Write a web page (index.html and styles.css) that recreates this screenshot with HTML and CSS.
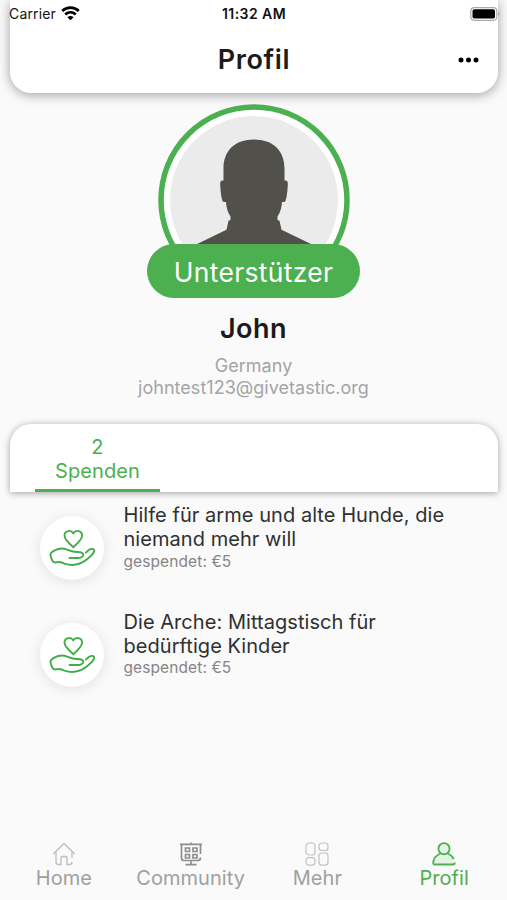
FILE: index.html
```html
<!DOCTYPE html>
<html lang="de">
<head>
<meta charset="utf-8">
<title>Profil</title>
<link rel="stylesheet" href="styles.css">
</head>
<body>
<svg class="defs" width="0" height="0">
  <symbol id="hand-heart" viewBox="0 0 64 64">
    <path d="M33.300 31.200C29 27.500 24.500 23.500 24.500 19.600c0-5 6.400-6.400 8.800-2.200 2.400-4.200 8.800-2.800 8.800 2.200 0 3.900-4.500 7.900-8.800 11.600z"/>
    <path d="M29.500 42h8c6.800 0 7.600-5.500 2-5.700-5.500-.2-8.500-.8-12.500-2.700-4-1.800-8.500-1.200-12.700 1-3 1.500-4.300 2.500-3.800 4.800.4 2 1 4 2.200 5.800 1.300 2 3 1.200 5.200.9 2.200-.3 4 .5 6.500 1.500 7 2.400 13 1.500 18-1.200 3.500-2 6.500-4.300 9-7 2-2.200 3.500-4.200 2.600-5.600-1.200-1.600-3.700-1-5.500.5l-2.700 2.300"/>
  </symbol>
</svg>
<div class="screen">
  <header class="header">
    <div class="status">
      <div class="carrier">Carrier
        <svg width="19" height="15" viewBox="0 0 19 15"><g fill="none" stroke="#000" stroke-width="2.700"><path d="M1.200 5c4.800-4.400 11.800-4.400 16.600 0"/><path d="M4.200 8.500c3.100-2.800 7.500-2.800 10.600 0"/></g><path d="M9.500 14.300L6.400 11.200q3.100-2.500 6.200 0z"/></svg>
      </div>
      <div class="clock">11:32 AM</div>
      <svg class="battery" width="31" height="14" viewBox="0 0 31 14"><rect x=".8" y=".6" width="26" height="12.700" rx="3.500" fill="#fff" stroke="#aaa" stroke-width="1.200"/><rect x="2.500" y="2.300" width="22.500" height="9.300" rx="1.800"/><path d="M28.500 4.800q2.200 2.100 0 4.300z" fill="#999"/></svg>
    </div>
    <div class="titlebar">
      <h1>Profil</h1>
      <svg class="more" width="22" height="6" viewBox="0 0 22 6"><circle cx="3" cy="3" r="2.500"/><circle cx="10.500" cy="3" r="2.500"/><circle cx="18" cy="3" r="2.500"/></svg>
    </div>
  </header>
  <section class="profile">
    <div class="avatar">
      <svg width="192" height="192" viewBox="158 103.500 192 192">
        <circle cx="254" cy="199.500" r="93" fill="#fff" stroke="#4caf50" stroke-width="5.500"/>
        <circle cx="254" cy="199.500" r="84" fill="#ebebeb"/>
        <path fill="#51504a" d="M254 139c-19 0-30.500 11-30.500 29v12c-3.500-.5-3.500 2-3.200 6 .4 6 .9 10 2 14 .5 1.700 2 1.500 3.700 1.500.5 6 1.500 10 4.500 14.500v3.500l-2 .8-2 9-31 15v10h117v-10l-31-15-2-9-2-.8v-3.500c3-4.500 4-8.500 4.500-14.500 1.700 0 3.200.2 3.700-1.500 1.100-4 1.600-8 2-14 .3-4 .3-6.500-3.200-6v-12c0-18-11.500-29-30.500-29z"/>
      </svg>
    </div>
    <div class="badge">Unterstützer</div>
    <h2>John</h2>
    <div class="country">Germany</div>
    <div class="email">johntest123@givetastic.org</div>
  </section>
  <nav class="tabs">
    <div class="tab"><span>2</span><span>Spenden</span></div>
  </nav>
  <main class="list">
    <article class="item">
      <div class="round"><svg width="64" height="64"><use href="#hand-heart"/></svg></div>
      <div><h3>Hilfe für arme und alte Hunde, die<br>niemand mehr will</h3><p>gespendet: €5</p></div>
    </article>
    <article class="item">
      <div class="round"><svg width="64" height="64"><use href="#hand-heart"/></svg></div>
      <div><h3>Die Arche: Mittagstisch für<br>bedürftige Kinder</h3><p>gespendet: €5</p></div>
    </article>
  </main>
  <footer class="bottom">
    <div class="nav"><svg width="24" height="24" viewBox="0 0 24 24" stroke="#bdbdbd" stroke-width="1.300"><path d="M1.300 12L12 1.500 22.700 12M4 10v10q0 2.500 2.500 2.500H9V16q0-1.500 1.500-1.500h3q1.500 0 1.500 1.500v6.500h2.500q2.500 0 2.500-2.500M20 10v6"/></svg><span>Home</span></div>
    <div class="nav"><svg width="24" height="24" viewBox="0 0 24 24" stroke="#8e8e8e" stroke-width="1.700"><path d="M1 2.300h22M12 .5v2M2.500 2.500V16q0 2.500 2.500 2.500h14q2.500 0 2.500-3M21.500 2.500V12M12 18v4.500M6.500 22.700h11M6.500 6h4v3.500h-4zM14 6h4v3.500h-4zM6.500 12.500h4V16h-4zM14 12.500h4V16h-4z"/></svg><span>Community</span></div>
    <div class="nav"><svg width="24" height="24" viewBox="0 0 24 24" stroke="#c2c2c2" stroke-width="1.200"><rect x="1" y="1" width="9" height="12" rx="3"/><rect x="14" y="1" width="9" height="7.500" rx="3"/><rect x="1" y="15.700" width="9" height="7.500" rx="3"/><rect x="14" y="11" width="9" height="12.200" rx="3"/></svg><span>Mehr</span></div>
    <div class="nav active"><svg width="24" height="24" viewBox="0 0 24 24" stroke="#4caf50" stroke-width="1.800"><path fill="#e3f3e4" stroke="none" d="M1.500 22.500c0-6 4.500-9.500 10.500-9.500s10.500 3.500 10.500 9.500z"/><path d="M8.500 11.500C4 13.500 1.200 17 1.200 21q0 1.500 1.500 1.500H21q1.800 0 1.800-2M15.500 11.500c3.500 1.200 5 3 6.300 5.500"/><circle cx="12" cy="6.700" r="5.600" fill="#e3f3e4"/></svg><span>Profil</span></div>
  </footer>
</div>
</body>
</html>
```
FILE: styles.css
```css
* { box-sizing: border-box; }
body { margin: 0; background: #fafafa; font-family: Inter, "Liberation Sans", sans-serif; }
h1, h2, h3, p { margin: 0; }
svg { display: block; }
.defs { position: absolute; }
.screen { width: 507px; height: 900px; display: flex; flex-direction: column; overflow: hidden; }
.header { height: 93px; flex: none; margin: 0 9px 0 10px; background: #fff; border-radius: 0 0 21px 21px; box-shadow: 0 2px 12px rgba(0,0,0,.36); }
.status { height: 27px; display: grid; grid-template-columns: 1fr auto 1fr; align-items: center; font-size: 14px; color: #111; }
.carrier { display: flex; align-items: center; gap: 5px; margin-left: -1px; letter-spacing: .15px; }
.clock { font-weight: 600; font-size: 14px; letter-spacing: .45px; }
.battery { justify-self: end; margin-right: -3px; }
.titlebar { height: 66px; display: grid; grid-template-columns: 1fr auto 1fr; align-items: center; }
.titlebar h1 { grid-column: 2; font-size: 27px; line-height: 66px; font-weight: 600; letter-spacing: .6px; color: #1b1b1b; }
.more { justify-self: end; margin-right: 18px; margin-top: -1px; }
.profile { height: 331px; flex: none; padding-top: 10.500px; display: flex; flex-direction: column; align-items: center; }
.avatar { height: 140.500px; }
.badge { position: relative; width: 213px; height: 54px; border-radius: 27px; background: #4caf50; color: #fff; font-size: 26.500px; line-height: 56px; text-align: center; letter-spacing: .3px; }
.profile h2 { margin-top: 15px; font-size: 27px; line-height: 32px; font-weight: 600; letter-spacing: .5px; color: #1b1b1b; }
.country, .email { font-size: 18px; line-height: 22px; color: #a4a4a4; letter-spacing: .03px; }
.country { margin-top: 10px; }
.tabs { height: 68px; flex: none; margin: 0 9px 0 10px; padding-left: 25px; background: #fff; border-radius: 21px 21px 0 0; box-shadow: 0 1px 7px rgba(0,0,0,.36); }
.tab { width: 125px; height: 68px; padding-top: 11px; border-bottom: 3px solid #4caf50; display: flex; flex-direction: column; align-items: center; color: #4caf50; font-size: 20px; line-height: 24px; letter-spacing: .12px; }
.list { flex: 1; padding: 11px 0 0 40px; }
.item { height: 106.500px; display: flex; gap: 19.500px; }
.round { width: 64px; height: 64px; margin-top: 13px; border-radius: 50%; background: #fff; box-shadow: 0 2px 14px rgba(0,0,0,.1); }
.round svg { fill: none; stroke: #41ac49; stroke-width: 1.900; stroke-linecap: round; stroke-linejoin: round; }
.item h3 { font-size: 20px; font-weight: 400; line-height: 24.300px; letter-spacing: .05px; color: #303030; white-space: nowrap; }
.item p { font-size: 15.500px; line-height: 19px; letter-spacing: .1px; color: #858585; }
.bottom { height: 72px; flex: none; display: grid; grid-template-columns: repeat(4, 1fr); border-top: 1px solid #f6f6f6; }
.nav { display: flex; flex-direction: column; align-items: center; padding: 13px 0 0 1px; font-size: 20px; line-height: 24px; letter-spacing: .05px; color: #a0a0a0; }
.nav svg { fill: none; }
.active { color: #4caf50; }
```
